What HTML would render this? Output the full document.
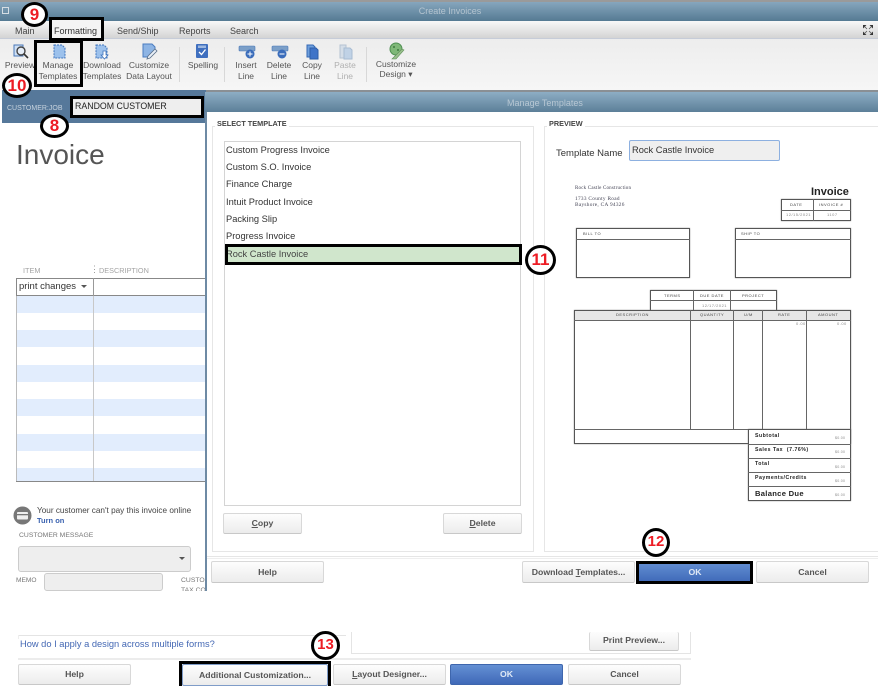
<!DOCTYPE html>
<html><head><meta charset="utf-8"><style>
html,body{margin:0;padding:0}
body{width:878px;height:686px;position:relative;overflow:hidden;background:#fff;font-family:"Liberation Sans",sans-serif;color:#333}
.a{position:absolute}
.t{position:absolute;white-space:nowrap;line-height:1}
.c{text-align:center;transform:translateX(-50%)}
.btn{position:absolute;box-sizing:border-box;border:1px solid #d8d8d8;border-bottom-color:#c8c8c8;border-radius:2px;background:linear-gradient(#fdfdfd,#ececec);font-size:8.7px;font-weight:bold;color:#555;text-align:center}
.ok{background:linear-gradient(#6490d4,#3f69b8);color:#dfe8f5;border-color:#3e66ad}
.tb{font-size:8.5px;color:#555;text-align:center;line-height:11px;transform:translateX(-50%);white-space:nowrap;position:absolute}
.hl{position:absolute;box-sizing:border-box;border:3px solid #000}
.n{position:absolute;box-sizing:border-box;border:3.500px solid #000;border-radius:50%;background:#fff;color:#ed1c24;font-weight:bold;font-size:17px;text-align:center;font-family:"Liberation Sans",sans-serif}
.li{position:absolute;left:226px;font-size:9.300px;color:#333;white-space:nowrap;line-height:1}
.g{position:absolute;background:#666}
.s{position:absolute;font-size:4px;color:#444;white-space:nowrap;line-height:1;letter-spacing:.5px}
.b{position:absolute;font-size:5.200px;font-weight:bold;color:#222;white-space:nowrap;line-height:1;letter-spacing:.5px}
.v{position:absolute;left:835px;font-size:3.500px;color:#888;line-height:1;letter-spacing:.3px}
.bx{position:absolute;box-sizing:border-box;border:1px solid #555;box-shadow:0 0 1px #777}
</style></head><body>

<!-- title bar -->
<div class="a" style="left:0;top:0;width:878px;height:2px;background:#9a9a9a"></div>
<div class="a" style="left:0;top:2px;width:878px;height:19px;background:linear-gradient(#86a6bd,#557a93)"></div>
<div class="a" style="left:2px;top:7px;width:5px;height:5px;border:1px solid #d5dde3"></div>
<div class="t c" style="left:450px;top:7px;font-size:9px;color:#b4c4d0">Create Invoices</div>

<!-- tabs -->
<div class="a" style="left:0;top:21px;width:878px;height:18px;background:linear-gradient(#f8f8f8,#d4d4d4);border-bottom:1px solid #c6ccd8;box-sizing:border-box"></div>
<div class="a" style="left:49px;top:19px;width:53px;height:20px;background:#f4f4f4"></div>
<div class="t" style="left:15px;top:27px;font-size:9px;color:#444">Main</div>
<div class="t" style="left:54px;top:27px;font-size:9px;color:#333">Formatting</div>
<div class="t" style="left:117px;top:27px;font-size:9px;color:#444">Send/Ship</div>
<div class="t" style="left:179px;top:27px;font-size:9px;color:#444">Reports</div>
<div class="t" style="left:230px;top:27px;font-size:9px;color:#444">Search</div>
<svg class="a" style="left:863px;top:25px" width="10" height="10" viewBox="0 0 10 10"><path d="M0 0h3.500L0 3.500zM10 0H6.500L10 3.500zM0 10h3.500L0 6.500zM10 10H6.500L10 6.500z" fill="#333"/><path d="M1 1l3 3M9 1L6 4M1 9l3-3M9 9L6 6" stroke="#555" stroke-width=".8"/></svg>

<!-- toolbar -->
<div class="a" style="left:0;top:39px;width:878px;height:51px;background:linear-gradient(#ededed,#f6f6f6)"></div>
<div class="a" style="left:206px;top:90px;width:672px;height:2px;background:#8a8f94"></div>
<div class="a" style="left:179px;top:47px;width:1px;height:35px;background:#d8d8d8"></div>
<div class="a" style="left:224px;top:47px;width:1px;height:35px;background:#d8d8d8"></div>
<div class="a" style="left:366px;top:47px;width:1px;height:35px;background:#d8d8d8"></div>

<svg class="a" style="left:0;top:40px" width="440" height="24" viewBox="0 0 440 24">
<!-- preview -->
<rect x="14" y="5" width="9" height="11" fill="#cfe0f5" stroke="#4a78b8"/><circle cx="21" cy="11" r="4" fill="#e6eef8" stroke="#444" stroke-width="1.400"/><path d="M24 14l4 4" stroke="#333" stroke-width="1.600"/>
<!-- manage -->
<path d="M54 5h8l3 3v10H54z" fill="#9cc1ec" stroke="#3f74bc" stroke-dasharray="2 1"/>
<!-- download -->
<path d="M96 5h8l3 3v10H96z" fill="#9cc1ec" stroke="#3f74bc" stroke-dasharray="2 1"/><path d="M103 11v4h-2l3.500 4 3.500-4h-2v-4z" fill="#fff" stroke="#3f74bc" stroke-width=".8"/>
<!-- customize layout -->
<path d="M143 4h9l3 3v4l-5 6h-7z" fill="#8db4e4" stroke="#4a7cc0"/><path d="M148 16l7-7 2 2-7 7-3 1z" fill="#e8eef6" stroke="#5a6f88" stroke-width=".8"/>
<!-- spelling -->
<rect x="196" y="4" width="12" height="14" rx="1" fill="#3f6fbf"/><path d="M199 12l2.500 2.500 4-5" stroke="#fff" stroke-width="1.300" fill="none"/><rect x="198" y="5.500" width="8" height="2.500" fill="#9db8e0"/>
<!-- insert -->
<rect x="239" y="6" width="16" height="5" rx="1" fill="#7b9fc8" stroke="#4a78b8" stroke-width=".6"/><circle cx="250" cy="14" r="4.500" fill="#3b6dbb"/><path d="M247.500 14h5M250 11.500v5" stroke="#fff"/>
<!-- delete -->
<rect x="272" y="6" width="16" height="5" rx="1" fill="#7b9fc8" stroke="#4a78b8" stroke-width=".6"/><circle cx="282" cy="14" r="4.500" fill="#3b6dbb"/><path d="M279.500 14h5" stroke="#fff"/>
<!-- copy -->
<path d="M307 5h6l2 2v10h-8z" fill="#6e9fdc" stroke="#3569b5"/><path d="M310 8h6l2 2v9h-8z" fill="#3f74c8" stroke="#2c5ea8"/>
<!-- paste -->
<path d="M340 5h6v13h-6z" fill="#d5dee8" stroke="#b5c3d2"/><path d="M344 8h6l2 2v9h-8z" fill="#c0d2e6" stroke="#a8bcd2"/>
<!-- design -->
<circle cx="396" cy="9" r="6" fill="#7fb878" stroke="#4f8f52"/><circle cx="394" cy="7" r="1" fill="#3f7a40"/><circle cx="398" cy="10" r="1" fill="#3f7a40"/><path d="M392 19l10-10 2 1-8 9z" fill="#9ac08c" stroke="#5f8f5a" stroke-width=".6"/>
</svg>

<div class="tb" style="left:20px;top:60px">Preview</div>
<div class="tb" style="left:58px;top:60px">Manage<br>Templates</div>
<div class="tb" style="left:102px;top:60px">Download<br>Templates</div>
<div class="tb" style="left:149px;top:60px">Customize<br>Data Layout</div>
<div class="tb" style="left:203px;top:60px">Spelling</div>
<div class="tb" style="left:246px;top:60px">Insert<br>Line</div>
<div class="tb" style="left:279px;top:60px">Delete<br>Line</div>
<div class="tb" style="left:312px;top:60px">Copy<br>Line</div>
<div class="tb" style="left:345px;top:60px;color:#b0b0b0">Paste<br>Line</div>
<div class="tb" style="left:396px;top:60px;line-height:9.500px">Customize<br>Design ▾</div>

<!-- customer bar -->
<div class="a" style="left:2px;top:90px;width:204px;height:33px;background:#56789a"></div>
<div class="t" style="left:7px;top:105px;font-size:7px;color:#c6d2dd">CUSTOMER:JOB</div>
<div class="a" style="left:72px;top:97px;width:130px;height:20px;background:#eee"></div>
<div class="t" style="left:75px;top:102px;font-size:8.800px;color:#222">RANDOM CUSTOMER</div>

<!-- Left invoice -->
<div class="t" style="left:16px;top:141px;font-size:28px;color:#555">Invoice</div>
<div class="t" style="left:23px;top:267px;font-size:7.300px;color:#a4a4a4">ITEM</div>
<div class="t" style="left:99px;top:267px;font-size:7.300px;color:#a4a4a4">DESCRIPTION</div>
<div class="t" style="left:90px;top:265px;font-size:9px;color:#999">⋮</div>

<div class="a" style="left:16px;top:296px;width:189px;height:17px;background:#e2edfd"></div>
<div class="a" style="left:16px;top:330px;width:189px;height:17px;background:#e2edfd"></div>
<div class="a" style="left:16px;top:365px;width:189px;height:17px;background:#e2edfd"></div>
<div class="a" style="left:16px;top:399px;width:189px;height:17px;background:#e2edfd"></div>
<div class="a" style="left:16px;top:434px;width:189px;height:17px;background:#e2edfd"></div>
<div class="a" style="left:16px;top:468px;width:189px;height:13px;background:#e2edfd"></div>
<div class="a" style="left:16px;top:278px;width:1px;height:203px;background:#bbb"></div>
<div class="a" style="left:93px;top:278px;width:1px;height:203px;background:#c8c8c8"></div>
<div class="a" style="left:16px;top:481px;width:189px;height:1px;background:#888"></div>
<div class="a" style="left:16px;top:278px;width:189px;height:18px;box-sizing:border-box;border:1px solid #888;border-right:0;background:#fff"></div>
<div class="a" style="left:93px;top:278px;width:1px;height:18px;background:#999"></div>
<div class="t" style="left:19px;top:282px;font-size:9.500px;color:#333">print changes</div>
<div class="a" style="left:81px;top:285px;border-left:3.500px solid transparent;border-right:3.500px solid transparent;border-top:3.500px solid #555"></div>

<svg class="a" style="left:13px;top:506px" width="19" height="19"><circle cx="9.500" cy="9.500" r="9" fill="#777"/><rect x="4" y="6" width="11" height="7.500" rx="1" fill="#eee"/><rect x="4" y="8" width="11" height="1.300" fill="#777"/></svg>
<div class="t" style="left:37px;top:507px;font-size:8.200px;color:#444">Your customer can't pay this invoice online</div>
<div class="t" style="left:37px;top:517px;font-size:7.500px;color:#3a62b0;font-weight:bold">Turn on</div>
<div class="t" style="left:19px;top:533px;font-size:6.800px;color:#777">CUSTOMER MESSAGE</div>
<div class="a" style="left:18px;top:546px;width:173px;height:26px;box-sizing:border-box;background:#eee;border:1px solid #ccc;border-radius:3px"></div>
<div class="a" style="left:179px;top:557px;border-left:3px solid transparent;border-right:3px solid transparent;border-top:3.500px solid #555"></div>
<div class="t" style="left:16px;top:578px;font-size:6.600px;color:#777">MEMO</div>
<div class="a" style="left:44px;top:573px;width:119px;height:18px;box-sizing:border-box;background:#eee;border:1px solid #ccc;border-radius:3px"></div>
<div class="t" style="left:181px;top:578px;font-size:6.800px;color:#777">CUSTO</div>
<div class="a" style="left:181px;top:587px;width:24px;height:4px;overflow:hidden;font-size:6.800px;line-height:7px;color:#777;white-space:nowrap">TAX CO</div>

<!-- Manage Templates dialog -->
<div class="a" style="left:205px;top:92px;width:673px;height:499px;background:#fff"></div>
<div class="a" style="left:205px;top:92px;width:2px;height:499px;background:#6e8aa4"></div>
<div class="a" style="left:205px;top:92px;width:673px;height:20px;background:linear-gradient(#8dadc4,#5c7f98)"></div>
<div class="t c" style="left:545px;top:99px;font-size:9px;color:#b8c8d4">Manage Templates</div>

<!-- Select template -->
<div class="a" style="left:212px;top:126px;width:322px;height:426px;box-sizing:border-box;border:1px solid #e6e6e6"></div>
<div class="t" style="left:215px;top:120px;font-size:7.300px;font-weight:bold;color:#444;background:#fff;padding:0 2px">SELECT TEMPLATE</div>
<div class="a" style="left:224px;top:141px;width:297px;height:365px;box-sizing:border-box;border:1px solid #d4d4d4;background:#fff"></div>
<div class="li" style="top:146px">Custom Progress Invoice</div>
<div class="li" style="top:163px">Custom S.O. Invoice</div>
<div class="li" style="top:180px">Finance Charge</div>
<div class="li" style="top:198px">Intuit Product Invoice</div>
<div class="li" style="top:215px">Packing Slip</div>
<div class="li" style="top:232px">Progress Invoice</div>
<div class="a" style="left:225px;top:244px;width:297px;height:21px;background:#d0e6cc"></div>
<div class="li" style="top:250px;color:#444">Rock Castle Invoice</div>
<div class="btn" style="left:223px;top:513px;width:79px;height:21px;line-height:19px"><u>C</u>opy</div>
<div class="btn" style="left:443px;top:513px;width:79px;height:21px;line-height:19px"><u>D</u>elete</div>

<!-- Preview -->
<div class="a" style="left:544px;top:126px;width:334px;height:426px;box-sizing:border-box;border:1px solid #e6e6e6;border-right:0"></div>
<div class="t" style="left:547px;top:120px;font-size:7.300px;font-weight:bold;color:#444;background:#fff;padding:0 2px">PREVIEW</div>
<div class="t" style="left:556px;top:149px;font-size:9.500px;color:#333">Template Name</div>
<div class="a" style="left:629px;top:140px;width:151px;height:21px;box-sizing:border-box;background:#efefef;border:1px solid #8db0e0;border-radius:2px"></div>
<div class="t" style="left:632px;top:146px;font-size:9.300px;color:#333">Rock Castle Invoice</div>

<!-- invoice preview -->
<div class="t" style="left:575px;top:186px;font:5px 'Liberation Serif',serif;color:#445;letter-spacing:.2px">Rock Castle Construction</div>
<div class="t" style="left:575px;top:196px;font:5.300px 'Liberation Serif',serif;color:#445;letter-spacing:.3px">1733 County Road</div>
<div class="t" style="left:575px;top:202px;font:5.300px 'Liberation Serif',serif;color:#445;letter-spacing:.3px">Bayshore, CA 94326</div>
<div class="t" style="left:811px;top:187px;font-size:11px;font-weight:bold;color:#222">Invoice</div>

<div class="bx" style="left:781px;top:199px;width:70px;height:22px"></div>
<div class="g" style="left:813px;top:199px;width:1px;height:22px"></div>
<div class="g" style="left:781px;top:210px;width:70px;height:1px"></div>
<div class="s" style="left:790px;top:203px">DATE</div><div class="s" style="left:819px;top:203px">INVOICE #</div>
<div class="s" style="left:786px;top:213px;color:#888">12/15/2021</div><div class="s" style="left:827px;top:213px;color:#888">1107</div>

<div class="bx" style="left:576px;top:228px;width:114px;height:50px"></div>
<div class="g" style="left:576px;top:239px;width:114px;height:1px"></div>
<div class="s" style="left:583px;top:232px">BILL TO</div>
<div class="bx" style="left:735px;top:228px;width:116px;height:50px"></div>
<div class="g" style="left:735px;top:239px;width:116px;height:1px"></div>
<div class="s" style="left:741px;top:232px">SHIP TO</div>

<div class="bx" style="left:650px;top:290px;width:127px;height:21px"></div>
<div class="g" style="left:650px;top:300px;width:127px;height:1px"></div>
<div class="g" style="left:693px;top:290px;width:1px;height:21px"></div>
<div class="g" style="left:730px;top:290px;width:1px;height:21px"></div>
<div class="s" style="left:664px;top:294px">TERMS</div><div class="s" style="left:700px;top:294px">DUE DATE</div><div class="s" style="left:742px;top:294px">PROJECT</div>
<div class="s" style="left:702px;top:304px;color:#888">12/17/2021</div>

<div class="bx" style="left:574px;top:310px;width:277px;height:134px;background:#fff"></div>
<div class="a" style="left:575px;top:311px;width:275px;height:10px;background:#e6e6e6"></div>
<div class="g" style="left:574px;top:320px;width:277px;height:1px"></div>
<div class="g" style="left:690px;top:310px;width:1px;height:120px"></div>
<div class="g" style="left:733px;top:310px;width:1px;height:120px"></div>
<div class="g" style="left:762px;top:310px;width:1px;height:120px"></div>
<div class="g" style="left:806px;top:310px;width:1px;height:120px"></div>
<div class="g" style="left:574px;top:429px;width:277px;height:1px"></div>
<div class="s" style="left:616px;top:313px">DESCRIPTION</div><div class="s" style="left:700px;top:313px">QUANTITY</div><div class="s" style="left:744px;top:313px">U/M</div><div class="s" style="left:778px;top:313px">RATE</div><div class="s" style="left:818px;top:313px">AMOUNT</div>
<div class="s" style="left:796px;top:322px;color:#888">0.00</div><div class="s" style="left:837px;top:322px;color:#888">0.00</div>

<div class="bx" style="left:748px;top:429px;width:103px;height:72px;background:#fff"></div>
<div class="g" style="left:748px;top:444px;width:103px;height:1px"></div>
<div class="g" style="left:748px;top:458px;width:103px;height:1px"></div>
<div class="g" style="left:748px;top:472px;width:103px;height:1px"></div>
<div class="g" style="left:748px;top:486px;width:103px;height:1px"></div>
<div class="b" style="left:755px;top:434px">Subtotal</div>
<div class="b" style="left:755px;top:448px">Sales Tax&nbsp; (7.76%)</div>
<div class="b" style="left:755px;top:462px">Total</div>
<div class="b" style="left:755px;top:476px">Payments/Credits</div>
<div class="b" style="left:755px;top:490px;font-size:7.600px;letter-spacing:.3px">Balance Due</div>
<div class="v" style="top:437px">$0.00</div><div class="v" style="top:451px">$0.00</div><div class="v" style="top:466px">$0.00</div><div class="v" style="top:480px">$0.00</div><div class="v" style="top:494px">$0.00</div>

<!-- dialog footer -->
<div class="a" style="left:207px;top:556px;width:671px;height:3px;box-sizing:border-box;border-top:1px solid #e6e6e6;border-bottom:1px solid #eee"></div>
<div class="btn" style="left:211px;top:561px;width:113px;height:22px;line-height:20px">Help</div>
<div class="btn" style="left:522px;top:561px;width:113px;height:22px;line-height:20px">Download <u>T</u>emplates...</div>
<div class="btn ok" style="left:637px;top:561px;width:116px;height:22px;line-height:20px">OK</div>
<div class="btn" style="left:756px;top:561px;width:113px;height:22px;line-height:20px">Cancel</div>

<!-- Bottom window -->
<div class="a" style="left:19px;top:635px;width:327px;height:1px;background:#e4e4e4"></div>
<div class="a" style="left:18px;top:635px;width:1px;height:4px;background:#eee"></div>
<div class="t" style="left:20px;top:640px;font-size:9.300px;color:#4468b4">How do I apply a design across multiple forms?</div>
<div class="a" style="left:351px;top:632px;width:1px;height:22px;background:#e4e4e4"></div>
<div class="a" style="left:690px;top:632px;width:1px;height:22px;background:#e4e4e4"></div>
<div class="a" style="left:351px;top:653px;width:340px;height:1px;background:#e4e4e4"></div>
<div class="a" style="left:18px;top:658px;width:673px;height:2px;background:#ececec"></div>
<div class="btn" style="left:589px;top:632px;width:90px;height:19px;line-height:17px;border-top:0">Print Preview...</div>
<div class="btn" style="left:18px;top:664px;width:113px;height:21px;line-height:19px">Help</div>
<div class="btn" style="left:182px;top:664px;width:146px;height:22px;line-height:20px;border-color:#7f9cc8">Additional Customization...</div>
<div class="btn" style="left:333px;top:664px;width:113px;height:21px;line-height:19px"><u>L</u>ayout Designer...</div>
<div class="btn ok" style="left:450px;top:664px;width:113px;height:21px;line-height:19px">OK</div>
<div class="btn" style="left:568px;top:664px;width:113px;height:21px;line-height:19px">Cancel</div>

<!-- annotation rects -->
<div class="hl" style="left:49px;top:17px;width:55px;height:24px"></div>
<div class="hl" style="left:34px;top:40px;width:49px;height:47px"></div>
<div class="hl" style="left:70px;top:96px;width:134px;height:22px"></div>
<div class="hl" style="left:225px;top:244px;width:297px;height:21px"></div>
<div class="hl" style="left:636px;top:561px;width:117px;height:23px"></div>
<div class="hl" style="left:179px;top:661px;width:152px;height:25px;border-bottom:0"></div>

<!-- annotation circles -->
<div class="n" style="left:21px;top:2px;width:27px;height:25px;line-height:19px">9</div>
<div class="n" style="left:2px;top:73px;width:30px;height:25px;line-height:19px">10</div>
<div class="n" style="left:40px;top:114px;width:29px;height:24px;line-height:18px">8</div>
<div class="n" style="left:525px;top:245px;width:31px;height:30px;line-height:23px">11</div>
<div class="n" style="left:642px;top:528px;width:28px;height:29px;line-height:22px;font-size:15px">12</div>
<div class="n" style="left:311px;top:631px;width:29px;height:29px;line-height:22px;font-size:15px">13</div>

</body></html>
